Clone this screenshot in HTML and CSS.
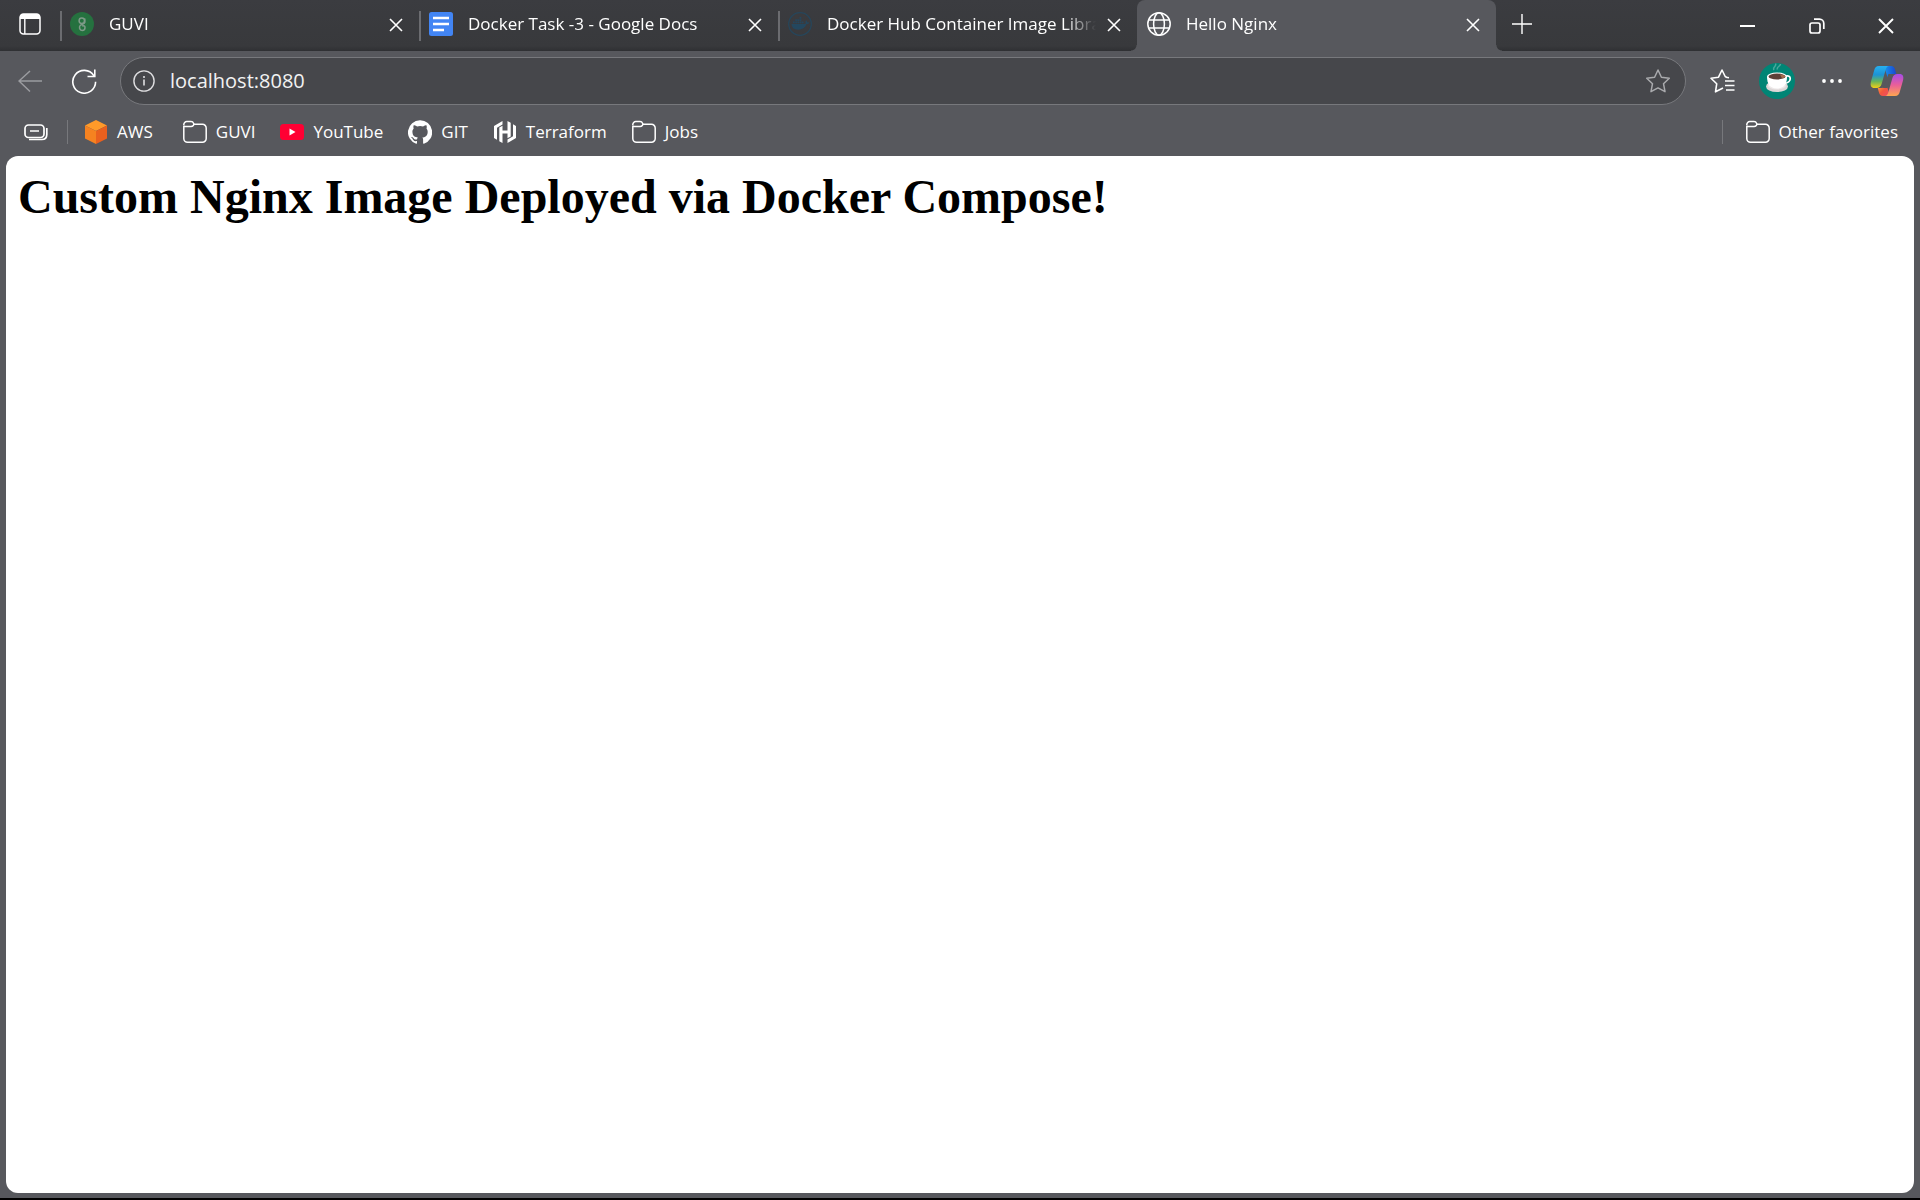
FILE: index.html
```html
<!DOCTYPE html>
<html lang="en">
<head>
<meta charset="utf-8">
<title>Hello Nginx</title>
<link rel="stylesheet" href="styles.css">
</head>
<body>
<svg class="defs" width="0" height="0" aria-hidden="true">
  <symbol id="close" viewBox="0 0 14 14"><path d="M1 1l12 12M13 1L1 13" fill="none" stroke="currentColor" stroke-width="1.6"/></symbol>
  <symbol id="folder" viewBox="0 0 24 24"><g fill="none" stroke="currentColor" stroke-width="1.5"><path d="M.8 6V18.500a3.700 3.700 0 0 0 3.700 3.700h15a3.700 3.700 0 0 0 3.700-3.700V8a3.700 3.700 0 0 0-3.700-3.700h-9"/><path d="M.8 5.500V4.600A3 3 0 0 1 3.800 1.600H8c1.200 0 2.200.8 2.700 1.900.3.700.1 1.500-.4 2.100C9.700 6.300 9 6.600 8 6.600H.8"/></g></symbol>
</svg>

<header class="tabstrip">
  <button class="workspace" aria-label="Tab actions">
    <svg width="22" height="22" viewBox="0 0 22 22"><rect x="1" y="1" width="20" height="20" rx="3.500" fill="none" stroke="#fff" stroke-width="1.500"/><path d="M1 6V4a3 3 0 0 1 3-3h14a3 3 0 0 1 3 3v2z" fill="#fff"/><path d="M5.800 6v15" stroke="#fff" stroke-width="1.400"/></svg>
  </button>
  <nav class="tabs" aria-label="Tabs">
    <div class="tab">
      <svg class="favicon" viewBox="0 0 24 24"><circle cx="12" cy="12" r="12" fill="#25713f"/><g fill="none" stroke="#7e9a88" stroke-width="1.500"><circle cx="11.800" cy="8.800" r="2.700"/><path d="M14.800 6.500v4c0 2-4.800 1.500-5.200 4-.3 1.800.4 4 2.600 4 2 0 2.800-1.500 2.800-3s-1-2-2.800-1.500"/></g></svg>
      <a class="title" href="#guvi">GUVI</a>
      <button class="close" aria-label="Close GUVI"><svg width="14" height="14"><use href="#close"/></svg></button>
    </div>
    <div class="tab">
      <svg class="favicon" viewBox="0 0 24 24"><rect width="24" height="24" rx="2.500" fill="#4285f4"/><path d="M4 6h16M4 12h16M4 18h11" stroke="#fff" stroke-width="2.700"/></svg>
      <a class="title" href="#docs">Docker Task -3 - Google Docs</a>
      <button class="close" aria-label="Close Google Docs"><svg width="14" height="14"><use href="#close"/></svg></button>
    </div>
    <div class="tab">
      <svg class="favicon" viewBox="0 0 24 24"><circle cx="12" cy="12" r="11.300" fill="none" stroke="#26465b" stroke-width="1.200"/><path d="M3.500 12h13.200c1 0 1.300-.8.900-1.700-.2-.7 0-1.500.5-2 .8.600 1.100 1.200 1.100 2 .8-.1 1.500 0 2 .4-.5 1-1.400 1.400-2.600 1.300-1.500 3.700-4.300 5.700-8.400 5.700-4.400 0-6.500-2.200-6.700-5.700z" fill="#24475e"/><path d="M5 9.500h1.700v1.700H5zM7.200 9.500h1.700v1.700H7.200zM9.400 9.500h1.700v1.700H9.400zM11.600 9.500h1.700v1.700h-1.700zM13.800 9.500h1.700v1.700h-1.700zM7.200 7.300h1.700V9H7.200zM9.400 7.300h1.700V9H9.400zM11.600 7.300h1.700V9h-1.700zM11.600 5.100h1.700v1.700h-1.700z" fill="#24475e"/></svg>
      <a class="title" href="#hub">Docker Hub Container Image Library</a>
      <button class="close" aria-label="Close Docker Hub"><svg width="14" height="14"><use href="#close"/></svg></button>
    </div>
    <div class="tab active">
      <svg class="favicon" viewBox="0 0 24 24" fill="none" stroke="#fff" stroke-width="1.500"><circle cx="12" cy="12" r="11.200"/><ellipse cx="12" cy="12" rx="5.400" ry="11.200"/><path d="M2 8h20M2 16h20"/></svg>
      <a class="title" href="#nginx">Hello Nginx</a>
      <button class="close" aria-label="Close Hello Nginx"><svg width="14" height="14"><use href="#close"/></svg></button>
    </div>
  </nav>
  <button class="newtab" aria-label="New tab"><svg width="22" height="22" viewBox="0 0 22 22"><path d="M11 1v20M1 11h20" stroke="#fff" stroke-width="1.400"/></svg></button>
  <div class="window">
    <button aria-label="Minimize"><svg width="16" height="16" viewBox="0 0 16 16"><path d="M0 8h15" stroke="#fff" stroke-width="2"/></svg></button>
    <button aria-label="Restore"><svg width="16" height="16" viewBox="0 0 16 16" fill="none" stroke="#fff" stroke-width="1.700"><rect x="1" y="5" width="10" height="10" rx="2"/><path d="M5 1.200h5.500A4.300 4.300 0 0 1 14.800 5.500V11"/></svg></button>
    <button aria-label="Close window"><svg width="16" height="16" viewBox="0 0 16 16"><path d="M1 1l14 14M15 1L1 15" stroke="#fff" stroke-width="1.900"/></svg></button>
  </div>
</header>

<div class="toolbar">
  <button class="tool back" aria-label="Back"><svg width="24" height="24" viewBox="0 0 24 24" fill="none" stroke="#9b9ca0" stroke-width="1.500"><path d="M24 12H1M12 2L1 12l11 10.500"/></svg></button>
  <button class="tool reload" aria-label="Refresh"><svg width="26" height="26" viewBox="0 0 26 26" fill="none" stroke="#fff" stroke-width="1.600"><path d="M22.800 7.600A11.400 11.400 0 1 0 24.600 13.800M23.800 1.500v7H16.500"/></svg></button>
  <div class="address">
    <svg width="22" height="22" viewBox="0 0 22 22" fill="none" stroke="#dedee0" stroke-width="1.400"><circle cx="11" cy="11" r="10.100"/><path d="M11 9.500v6M11 6v2" stroke-width="1.600"/></svg>
    <input class="url" type="text" aria-label="Address" value="localhost:8080">
    <button class="star" aria-label="Add to favorites"><svg width="26" height="26" viewBox="0 0 26 26" fill="none" stroke="#a9aaad" stroke-width="1.500" stroke-linejoin="round"><path d="M13 2l3.400 7.200 7.900 1-5.800 5.500 1.500 8L13 19.900l-7 3.800 1.500-8L1.700 10.200l7.900-1z"/></svg></button>
  </div>
  <div class="actions">
    <button class="tool" aria-label="Favorites"><svg width="26" height="26" viewBox="0 0 26 26" fill="none" stroke="#fff" stroke-width="1.600" stroke-linejoin="round"><path d="M14 20l-7.500 3.800 1.200-8L2 10.200l7.500-1L13 2l3.200 6.500 1.300.8M17 9.300l3 .4M16 13h9.500M16 17.500h9.500M17 22h8.500"/></svg></button>
    <button class="tool" aria-label="Profile"><svg width="36" height="36" viewBox="0 0 36 36"><circle cx="18" cy="18" r="18" fill="#008575"/><path d="M15 7c-2-3 3-3.500 1.500-6.500M18.500 6.500c-1.500-2.500 3-3 3-5.500" fill="none" stroke="#4aa79b" stroke-width="1.500"/><ellipse cx="18" cy="23.500" rx="11" ry="5.500" fill="#dcd7d7"/><ellipse cx="18" cy="22.500" rx="9" ry="4" fill="#eeeaea"/><path d="M26 13.500c7-3 7.500 6.500-1.500 7" fill="none" stroke="#fff" stroke-width="1.700"/><path d="M8 13.500h20c0 7-2.500 12-10 12s-10-5-10-12z" fill="#fff"/><ellipse cx="18" cy="13.500" rx="10" ry="4" fill="#fff"/><ellipse cx="18" cy="13.500" rx="8.500" ry="3" fill="#5d4037"/><path d="M21 11.500c3 .2 5 1 5.400 2-.8 1-2 1.500-3.400 1.800z" fill="#a56b4a"/></svg></button>
    <button class="tool" aria-label="Settings and more"><svg width="22" height="22" viewBox="0 0 22 22" fill="#fff"><circle cx="3" cy="11" r="1.900"/><circle cx="11" cy="11" r="1.900"/><circle cx="19" cy="11" r="1.900"/></svg></button>
    <button class="tool" aria-label="Copilot"><svg width="34" height="32" viewBox="0 0 34 32">
      <defs>
        <linearGradient id="c1" x1="0" y1="0" x2="0" y2="1"><stop offset="0" stop-color="#27b0f0"/><stop offset=".4" stop-color="#1c93d5"/><stop offset=".7" stop-color="#68b45b"/><stop offset="1" stop-color="#f3cf14"/></linearGradient>
        <linearGradient id="c2" x1="0" y1="0" x2="0" y2="1"><stop offset="0" stop-color="#a64be8"/><stop offset=".5" stop-color="#ea5f99"/><stop offset="1" stop-color="#ffa650"/></linearGradient>
        <linearGradient id="c3" x1="0" y1="0" x2="1" y2="0"><stop offset="0" stop-color="#1796ee"/><stop offset="1" stop-color="#1a45cf"/></linearGradient>
        <linearGradient id="c4" x1="0" y1="0" x2="1" y2="1"><stop offset="0" stop-color="#ffb33d"/><stop offset=".5" stop-color="#f4563d"/><stop offset="1" stop-color="#ed4b69"/></linearGradient>
      </defs>
      <path d="M14 1h7c2.500 0 3.500 1.500 4.200 4l1 4h-3.500c-3 0-4 1.500-5 4z" fill="url(#c3)"/>
      <path d="M20 31h-7c-2.500 0-3.500-1.500-4.200-4l-1-4h3.500c3 0 4-1.500 5-4z" fill="url(#c4)"/>
      <path d="M9 1h10c-2 0-2.800 2-3.400 4l-4 14c-.8 2.800-2.500 4-5 4H4.500C1 23 0 20.500 1 16.500L4 6c.8-3.200 2-5 5-5z" fill="url(#c1)"/>
      <path d="M25 31H15c2 0 2.800-2 3.400-4l4-14c.8-2.800 2.500-4 5-4h2.100c3.500 0 4.500 2.500 3.500 6.500L30 26c-.8 3.200-2 5-5 5z" fill="url(#c2)"/>
      <path d="M18.500 9h4c-1.200.9-1.700 2.200-2.100 3.600L17.500 23h-5c1.200-.8 1.700-2.100 2.100-3.500z" fill="#57585d"/>
    </svg></button>
  </div>
</div>

<nav class="bookmarks" aria-label="Favorites bar">
  <button class="groups" aria-label="Workspaces"><svg width="24" height="18" viewBox="0 0 24 18" fill="none" stroke="#fff" stroke-width="1.700"><rect x="1" y="2" width="19" height="12.500" rx="3.500"/><path d="M6 8h9M22.800 5v6.500c0 3-2 5-5 5H5"/></svg></button>
  <a class="first" href="#aws"><svg width="24" height="24" viewBox="0 0 24 24"><path d="M12 0l11 5.500L12 11 1 5.500z" fill="#ff9a29"/><path d="M1 5.500L12 11v13L1 18.500z" fill="#f58220"/><path d="M23 5.500L12 11v13l11-5.500z" fill="#e9601e"/></svg>AWS</a>
  <a href="#guvi-folder"><svg width="24" height="24"><use href="#folder"/></svg>GUVI</a>
  <a href="#youtube"><svg width="24" height="24" viewBox="0 0 24 24"><rect y="4" width="24" height="16" rx="3.500" fill="#ff0033"/><path d="M9.500 8.500v7l6-3.500z" fill="#fff"/></svg>YouTube</a>
  <a href="#git"><svg width="24" height="24" viewBox="0 0 24 24"><path fill="#fff" d="M12 .3a12 12 0 0 0-3.800 23.400c.6.100.8-.3.800-.6v-2c-3.300.7-4-1.600-4-1.600-.6-1.400-1.400-1.800-1.400-1.800-1-.7.100-.7.100-.7 1.200.1 1.900 1.200 1.900 1.200 1 1.800 2.800 1.300 3.500 1 .1-.8.400-1.300.8-1.600-2.700-.3-5.500-1.300-5.500-6 0-1.200.5-2.300 1.300-3.100-.2-.4-.6-1.600 0-3.200 0 0 1-.3 3.400 1.200a11.500 11.500 0 0 1 6 0c2.300-1.500 3.300-1.200 3.300-1.200.7 1.600.2 2.800.1 3.200.8.800 1.200 1.900 1.200 3.200 0 4.600-2.800 5.600-5.500 5.900.5.400.9 1 .9 2.200v3.300c0 .3.200.7.800.6A12 12 0 0 0 12 .3"/></svg>GIT</a>
  <a href="#terraform"><svg width="24" height="24" viewBox="0 0 24 24"><path fill="#fff" d="M9.500 1L1 6v12l3 1.800V7.800l5.500-3.300zM14.500 1v9.500h-5V5.800L6.300 7.600v13.600l3.200 1.800v-9.500h5v4.700l3.200-1.800V2.800zM20 4.200v12l-5.500 3.300V23L23 18V6z"/></svg>Terraform</a>
  <a href="#jobs"><svg width="24" height="24"><use href="#folder"/></svg>Jobs</a>
  <a class="other" href="#other"><svg width="24" height="24"><use href="#folder"/></svg>Other favorites</a>
</nav>

<main class="page"><h1>Custom Nginx Image Deployed via Docker Compose!</h1></main>
</body>
</html>
```
FILE: styles.css
```css
* { box-sizing: border-box; }

body {
  margin: 0;
  min-height: 100vh;
  display: flex;
  flex-direction: column;
  background: #57585d;
  border-bottom: 2px solid #000;
  color: #fff;
  font: 17px/24px "Open Sans", sans-serif;
}

button {
  display: flex;
  align-items: center;
  justify-content: center;
  padding: 0;
  border: 0;
  background: none;
  color: inherit;
}

a { color: inherit; text-decoration: none; }
svg { flex: none; }
.defs { position: absolute; }

.tabstrip {
  display: flex;
  height: 51px;
  background: linear-gradient(#3b3c40, #38393c 46px, #2f3033);
}

.workspace { width: 60px; padding-bottom: 3px; }

.tabs { display: flex; flex: 0 1 1436px; min-width: 0; }

.tab {
  position: relative;
  display: flex;
  flex: 1 1 0;
  min-width: 0;
  align-items: center;
  gap: 15px;
  padding: 0 14px 3px 10px;
}

.tab::before {
  content: "";
  position: absolute;
  left: 0;
  top: 11px;
  width: 2px;
  height: 30px;
  background: #6b6c70;
}

.favicon { width: 24px; height: 24px; }

.title {
  flex: 1;
  overflow: hidden;
  white-space: nowrap;
  mask-image: linear-gradient(to left, transparent, #000 32px);
}

.close { width: 18px; height: 20px; padding-top: 2px; }
.tab .close { margin-left: -6px; }

.active {
  border-radius: 8px 8px 0 0;
  background: #57585d;
}

.active::before,
.active::after {
  content: "";
  position: absolute;
  top: auto;
  bottom: 0;
  width: 6px;
  height: 6px;
  background: radial-gradient(circle at 0 0, transparent 5px, #57585d 6px);
}

.active::before { left: -6px; }
.active::after { right: -6px; transform: scaleX(-1); }

.newtab { width: 52px; padding-bottom: 4px; }

.window { display: flex; margin-left: auto; }
.window button { width: 69px; }

.toolbar {
  display: flex;
  align-items: center;
  height: 59px;
}

.tool { width: 55px; height: 48px; }
.back { width: 60px; }
.reload { width: 48px; }

.address {
  display: flex;
  flex: 1;
  align-items: center;
  height: 48px;
  margin-left: 12px;
  padding: 0 14px 0 12px;
  border: 1px solid #77787c;
  border-radius: 24px;
  background: #46474b;
}

.url {
  flex: 1;
  min-width: 0;
  margin-left: 15px;
  padding: 0;
  border: 0;
  outline: 0;
  background: none;
  color: #f2f2f2;
  font: 20px/28px "Open Sans", sans-serif;
}

.actions { display: flex; margin: 0 6px 0 8px; }

.bookmarks {
  display: flex;
  align-items: center;
  gap: 25px;
  height: 46px;
  padding: 0 22px 2px 24px;
}

.bookmarks a {
  display: flex;
  align-items: center;
  gap: 9px;
}

.bookmarks .groups { margin-right: -6px; }

.bookmarks .first,
.bookmarks .other {
  padding-left: 16px;
  border-left: 1px solid #77787c;
}

.bookmarks .first { margin-right: 5px; }
.bookmarks .other { margin-left: auto; padding-left: 23px; }

.page {
  flex: 1;
  margin: 0 6px 5px;
  padding: 13px 12px;
  border-radius: 12px;
  background: #fff;
  color: #000;
}

h1 {
  margin: 0;
  font: bold 48px/56px "Liberation Serif", serif;
}
```
